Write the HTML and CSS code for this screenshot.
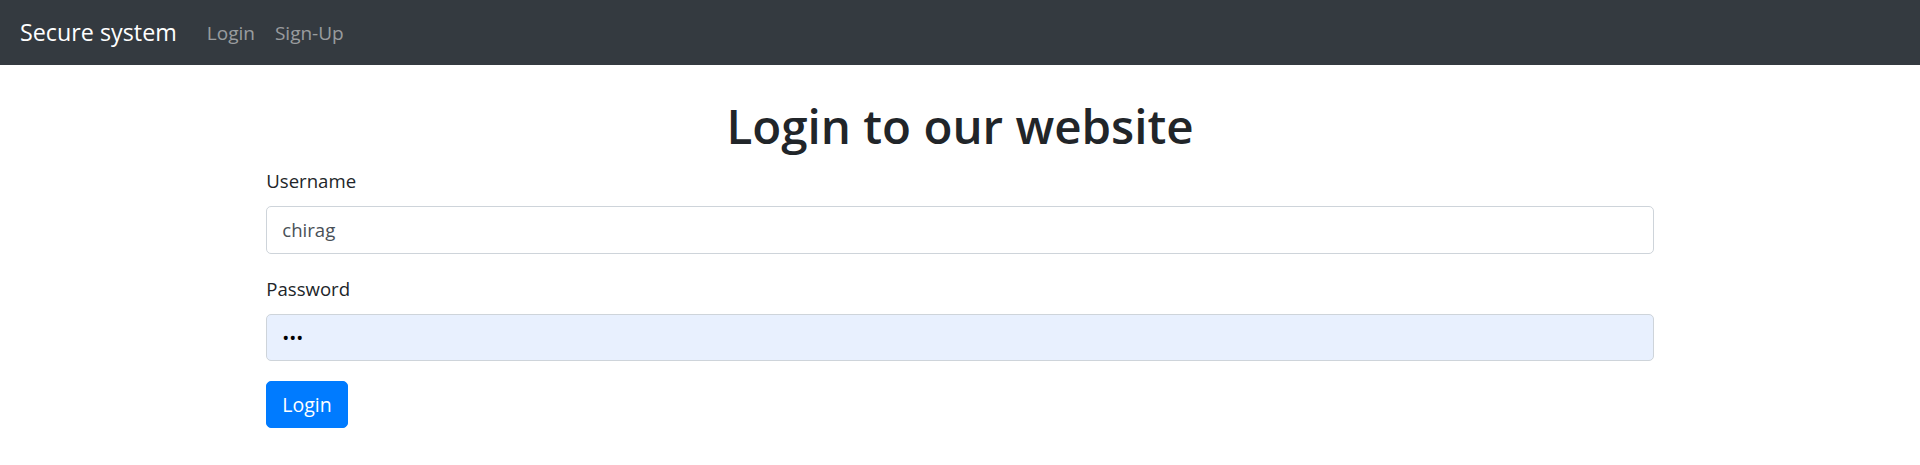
FILE: index.html
```html
<!DOCTYPE html>
<html lang="en">
<head>
<meta charset="utf-8">
<title>Secure system</title>
<link rel="stylesheet" href="styles.css">
</head>
<body>
<nav class="navbar">
  <a class="brand" href="#">Secure system</a>
  <ul class="nav">
    <li><a class="nav-link" href="#">Login</a></li>
    <li><a class="nav-link" href="#">Sign-Up</a></li>
  </ul>
</nav>
<main class="container">
  <h1 class="title">Login to our website</h1>
  <form class="form">
    <div class="form-group">
      <label class="label" for="username">Username</label>
      <input class="input" id="username" type="text" value="chirag">
    </div>
    <div class="form-group">
      <label class="label" for="password">Password</label>
      <input class="input input-autofill" id="password" type="password" value="abc">
    </div>
    <button class="btn" type="submit">Login</button>
  </form>
</main>
</body>
</html>
```
FILE: styles.css
```css
* { box-sizing: border-box; }
html, body { margin: 0; padding: 0; }
body {
  font-family: "Segoe UI", "Open Sans", "Noto Sans", sans-serif;
  font-size: 18.6px;
  line-height: 30px;
  color: #212529;
  background: #fff;
}
.navbar {
  display: flex;
  align-items: center;
  height: 65px;
  padding: 0 20px;
  background: #343a40;
}
.brand {
  font-size: 23.3px;
  color: #fff;
  text-decoration: none;
  margin-right: 20px;
  line-height: 37px;
}
.nav {
  display: flex;
  list-style: none;
  margin: 0;
  padding: 0;
}
.nav-link {
  display: block;
  padding: 0 10px;
  font-size: 19px;
  color: rgba(255,255,255,.5);
  text-decoration: none;
  line-height: 30px;
}
.container {
  max-width: 1425px;
  margin: 0 auto;
  padding: 31px 18.75px 0;
}
.title {
  font-size: 47.5px;
  font-weight: 600;
  line-height: 60px;
  text-align: center;
  margin: 0 0 10px;
}
.form-group { margin-bottom: 20px; }
.label {
  display: block;
  margin-bottom: 10px;
  line-height: 30px;
}
.input {
  display: block;
  width: 100%;
  height: 47.5px;
  padding: 7.5px 15px;
  font: inherit;
  color: #495057;
  background: #fff;
  border: 1px solid #ced4da;
  border-radius: 5px;
}
.input-autofill {
  background: #e8f0fe;
  color: #000;
}
.btn {
  display: inline-block;
  font: inherit;
  font-size: 19.5px;
  line-height: 30px;
  color: #fff;
  background: #007bff;
  border: 1px solid #007bff;
  border-radius: 5px;
  padding: 7.5px 15px;
}
```
